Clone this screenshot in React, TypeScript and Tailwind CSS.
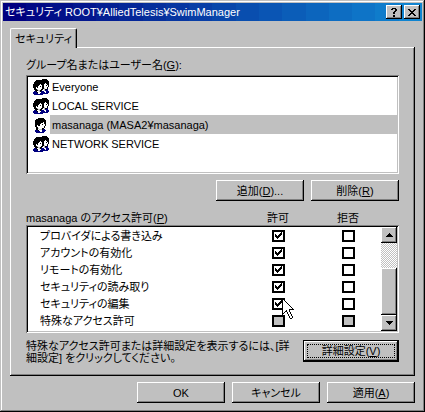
import React, { useState } from 'react';

const raised = 'bg-[#c0c0c0] shadow-[inset_-1px_-1px_#000,inset_1px_1px_#fff,inset_-2px_-2px_#808080]';
const sunken = 'bg-white p-[2px] shadow-[inset_1px_1px_#808080,inset_-1px_-1px_#fff,inset_2px_2px_#000,inset_-2px_-2px_#c0c0c0]';

// Title bar colour steps from navy to light blue
const BANDS = 18;
const titleGradient = `linear-gradient(to right, ${Array.from({ length: BANDS }, (_, i) => {
  const t = i / (BANDS - 1);
  const color = `rgb(${Math.round(16 * t)}, ${Math.round(132 * t)}, ${Math.round(128 + 80 * t)})`;
  return `${color} ${(i / BANDS) * 100}% ${((i + 1) / BANDS) * 100}%`;
}).join(', ')})`;

const palette: Record<string, string> = {
  k: '#000000',
  w: '#ffffff',
  g: '#c0c0c0',
  b: '#000080',
};

const groupPixels = [
  '.........kkkkk..',
  '...kkkkkkkkkkkk.',
  '..kkkkkkkkkkkkkk',
  '.kkkkkkkkkkkkkkk',
  '.kkkkkkkkkkkwkkk',
  'kkkkkkkwkkkwwwkk',
  'kkkkkkwwwkkwwkwk',
  'kkkkkwwkwkkwwwwk',
  'kkkwkwwwwkkwwwk.',
  '.kkwwwwwwkkgwwk.',
  '.kkkgwwwkkwgkkb.',
  '..kkkggkkwwgbbb.',
  '.bbkwwgkbbbwwbbb',
  'bbbbkwwwbbbbwbbb',
  'bbbbbwwbbbbbbbb.',
  '.bbbbbbbbb......',
];

const userPixels = [
  '................',
  '.....kkkkkk.....',
  '...kkkkkkkkk....',
  '..kkkkkkkkkkk...',
  '..kkkkkkkkkkk...',
  '..kkkkkkkkwkk...',
  '..kkkkkkwwwkk...',
  '..kkkkkwwkwwk...',
  '..kkwkkwwwwwk...',
  '..kkwwwwwwwk....',
  '...kkwwwwwwk....',
  '...kkgwwwkk.....',
  '...kkwgggkbb....',
  '..bbbkwwwbbbb...',
  '..bbbbbwwbbb....',
  '...bbbbbbbb.....',
];

const cursorPixels = [
  'k...........',
  'kk..........',
  'kwk.........',
  'kwwk........',
  'kwwwk.......',
  'kwwwwk......',
  'kwwwwwk.....',
  'kwwwwwwk....',
  'kwwwwwwwk...',
  'kwwwwwwwwk..',
  'kwwwwwwwwwk.',
  'kwwwwwwkkkkk',
  'kwwwkwwk....',
  'kwwkkwwk....',
  'kwk..kwwk...',
  'kk...kwwk...',
  'k.....kwwk..',
  '......kwwk..',
  '.......kwwk.',
  '.......kwwk.',
  '........kk..',
];

const checkPixels = [
  '......k',
  '.....kk',
  'k...kkk',
  'kk.kkk.',
  'kkkkk..',
  '.kkk...',
  '..k....',
];

const helpPixels = [
  '.kkkk.',
  'kk..kk',
  '....kk',
  '...kk.',
  '..kk..',
  '..kk..',
  '......',
  '..kk..',
  '..kk..',
];

const closePixels = [
  'kk....kk',
  '.kk..kk.',
  '..kkkk..',
  '...kk...',
  '..kkkk..',
  '.kk..kk.',
  'kk....kk',
];

const upPixels = ['...k...', '..kkk..', '.kkkkk.', 'kkkkkkk'];
const downPixels = ['kkkkkkk', '.kkkkk.', '..kkk..', '...k...'];

function PixelIcon({ pixels }: { pixels: string[] }) {
  const width = pixels[0].length;
  return (
    <svg
      width={width}
      height={pixels.length}
      viewBox={`0 0 ${width} ${pixels.length}`}
      shapeRendering="crispEdges"
      className="shrink-0"
      aria-hidden="true"
    >
      {pixels.flatMap((row, y) =>
        row.split('').map((c, x) =>
          c === '.' ? null : <rect key={`${x}-${y}`} x={x} y={y} width="1" height="1" fill={palette[c]} />
        )
      )}
    </svg>
  );
}

function DialogButton({ children }: { children: React.ReactNode }) {
  return (
    <button type="button" className={`flex h-[21px] w-[88px] items-center justify-center whitespace-nowrap ${raised}`}>
      {children}
    </button>
  );
}

type CheckBoxProps = {
  label: string;
  defaultChecked?: boolean;
  disabled?: boolean;
};

function CheckBox({ label, defaultChecked = false, disabled = false }: CheckBoxProps) {
  const [checked, setChecked] = useState(defaultChecked);

  return (
    <label className="grid h-3 w-[13px] place-items-center">
      <input
        type="checkbox"
        aria-label={label}
        checked={checked}
        disabled={disabled}
        onChange={(e) => setChecked(e.target.checked)}
        className="col-start-1 row-start-1 h-3 w-[13px] appearance-none border-2 border-black bg-white disabled:bg-[#c0c0c0]"
      />
      {checked && (
        <span className="pointer-events-none col-start-1 row-start-1">
          <PixelIcon pixels={checkPixels} />
        </span>
      )}
    </label>
  );
}

const principals = [
  { name: 'Everyone', icon: groupPixels },
  { name: 'LOCAL SERVICE', icon: groupPixels },
  { name: 'masanaga (MASA2¥masanaga)', icon: userPixels },
  { name: 'NETWORK SERVICE', icon: groupPixels },
];

const permissions = [
  { name: 'プロバイダによる書き込み', allow: true },
  { name: 'アカウントの有効化', allow: true },
  { name: 'リモートの有効化', allow: true },
  { name: 'セキュリティの読み取り', allow: true },
  { name: 'セキュリティの編集', allow: true, pointer: true },
  { name: '特殊なアクセス許可', allow: false, disabled: true },
];

export default function App() {
  const [selected, setSelected] = useState(2);

  return (
    <div className="w-full bg-[#c0c0c0] p-[3px] pb-[9px] font-['Liberation_Sans','Noto_Sans_CJK_JP',sans-serif] text-[11px] leading-3 text-black shadow-[inset_-1px_-1px_#000,inset_1px_1px_#c0c0c0,inset_-2px_-2px_#808080,inset_2px_2px_#fff] [font-feature-settings:'palt']">
      <header className="flex h-[18px] items-center justify-between px-[2px] text-white" style={{ background: titleGradient }}>
        <h1 className="whitespace-nowrap">セキュリティ ROOT¥AlliedTelesis¥SwimManager</h1>
        <div className="flex gap-[2px]">
          <button type="button" aria-label="ヘルプ" className={`flex h-[14px] w-4 items-center justify-center ${raised}`}>
            <PixelIcon pixels={helpPixels} />
          </button>
          <button type="button" aria-label="閉じる" className={`flex h-[14px] w-4 items-center justify-center ${raised}`}>
            <PixelIcon pixels={closePixels} />
          </button>
        </div>
      </header>

      <main className="px-[7px] pt-[7px]">
        <div role="tablist" className="flex">
          <button
            type="button"
            role="tab"
            aria-selected="true"
            className="relative z-10 -mb-px h-5 w-[67px] rounded-t-[2px] border-t border-r border-l border-t-white border-r-black border-l-white bg-[#c0c0c0] whitespace-nowrap shadow-[inset_-1px_0_#808080]"
          >
            セキュリティ
          </button>
        </div>

        <section className="px-4 pt-3 pb-3 shadow-[inset_-1px_-1px_#000,inset_1px_1px_#fff,inset_-2px_-2px_#808080]">
          <h2 className="mb-1 h-3">
            グループ名またはユーザー名(<u>G</u>):
          </h2>
          <ul role="listbox" className={`h-[99px] ${sunken}`}>
            {principals.map((p, i) => (
              <li
                key={p.name}
                role="option"
                aria-selected={selected === i}
                onClick={() => setSelected(i)}
                className="flex h-[19px] items-center gap-[1px] pl-[5px]"
              >
                <PixelIcon pixels={p.icon} />
                <span className={`flex h-full flex-1 items-center pl-[2px] ${selected === i ? 'bg-[#c0c0c0]' : ''}`}>
                  {p.name}
                </span>
              </li>
            ))}
          </ul>

          <div className="mt-[6px] flex justify-end gap-[7px]">
            <DialogButton>追加(<u>D</u>)...</DialogButton>
            <DialogButton>削除(<u>R</u>)</DialogButton>
          </div>

          <div className="mt-[9px] flex h-[15px] items-center pr-4">
            <h2 className="flex-1">masanaga のアクセス許可(<u>P</u>)</h2>
            <span className="w-[70px] text-center">許可</span>
            <span className="w-[70px] text-center">拒否</span>
          </div>

          <div className={`flex h-[108px] ${sunken}`}>
            <table className="flex-1 border-collapse self-start">
              <tbody>
                {permissions.map((p) => (
                  <tr key={p.name} className="h-[17px]">
                    <td className="p-0 pl-3 whitespace-nowrap">{p.name}</td>
                    <td className="w-[70px] p-0 pl-1">
                      <div className="relative flex justify-center">
                        <CheckBox label={`${p.name} 許可`} defaultChecked={p.allow} disabled={p.disabled} />
                        {p.pointer && (
                          <span className="pointer-events-none absolute top-0 left-1/2 z-20 ml-1">
                            <PixelIcon pixels={cursorPixels} />
                          </span>
                        )}
                      </div>
                    </td>
                    <td className="w-[70px] p-0 pl-1">
                      <div className="flex justify-center">
                        <CheckBox label={`${p.name} 拒否`} disabled={p.disabled} />
                      </div>
                    </td>
                  </tr>
                ))}
              </tbody>
            </table>
            <div className="flex w-4 flex-col bg-[repeating-conic-gradient(#c0c0c0_0_25%,#fff_0_50%)] bg-[length:2px_2px]">
              <button type="button" aria-label="上へ" className={`flex h-4 items-center justify-center ${raised}`}>
                <PixelIcon pixels={upPixels} />
              </button>
              <div className="flex-1" />
              <div className={`h-[47px] ${raised}`} />
              <button type="button" aria-label="下へ" className={`flex h-4 items-center justify-center ${raised}`}>
                <PixelIcon pixels={downPixels} />
              </button>
            </div>
          </div>

          <div className="mt-[7px] flex items-start justify-between">
            <p className="w-[266px]">特殊なアクセス許可または詳細設定を表示するには、[詳細設定] をクリックしてください。</p>
            <div className="border border-black">
              <button type="button" className={`flex h-5 w-[94px] p-[3px] whitespace-nowrap ${raised}`}>
                <span className="flex h-full w-full items-center justify-center border border-dotted border-black">
                  詳細設定(<u>V</u>)
                </span>
              </button>
            </div>
          </div>
        </section>

        <footer className="mt-[6px] flex justify-end gap-[7px]">
          <DialogButton>OK</DialogButton>
          <DialogButton>キャンセル</DialogButton>
          <DialogButton>適用(<u>A</u>)</DialogButton>
        </footer>
      </main>
    </div>
  );
}
